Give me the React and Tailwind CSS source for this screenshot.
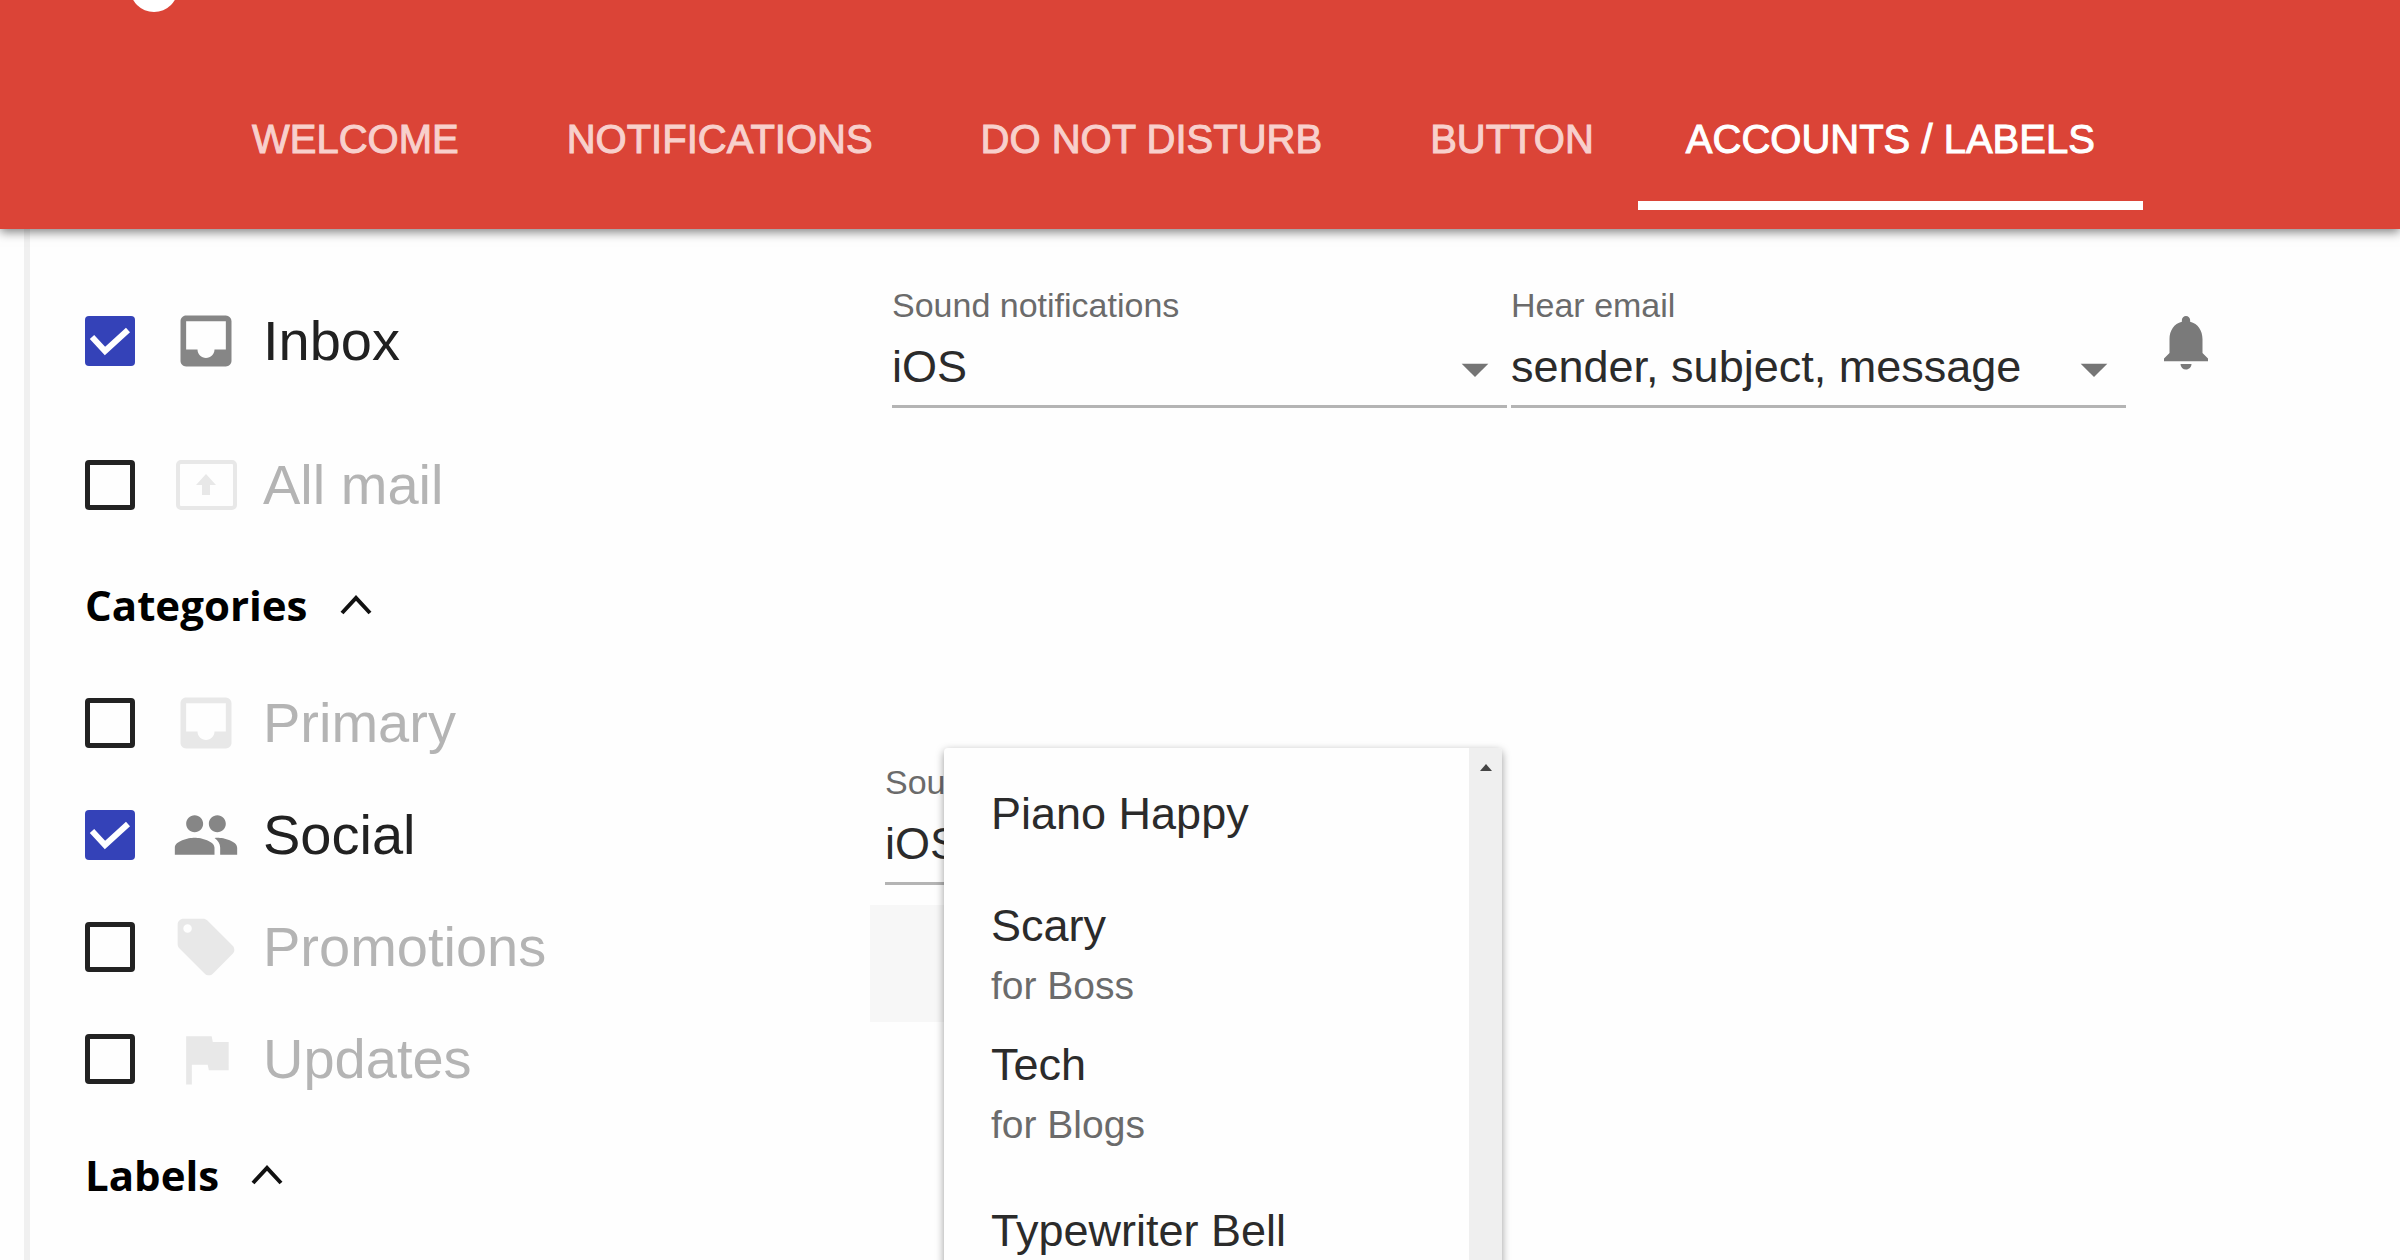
import { useState } from "react"
import { MdArrowDropDown, MdFlag, MdInbox, MdLocalOffer, MdNotifications, MdPeople } from "react-icons/md"

const tabs = ["Welcome", "Notifications", "Do not disturb", "Button", "Accounts / Labels"]

function AllMailIcon({ size, className }) {
  return (
    <svg width={size} height={size} viewBox="0 0 68 68" fill="none" className={className} aria-hidden="true">
      <rect x="6" y="11" width="57" height="46" rx="3" stroke="currentColor" strokeWidth="4" />
      <path d="M34 23 L44 34 H38 V44 H30 V34 H24 Z" fill="currentColor" />
    </svg>
  )
}

const mailboxes = [
  { id: "inbox", name: "Inbox", icon: MdInbox },
  { id: "all", name: "All mail", icon: AllMailIcon },
]

const categories = [
  { id: "primary", name: "Primary", icon: MdInbox },
  { id: "social", name: "Social", icon: MdPeople },
  { id: "promotions", name: "Promotions", icon: MdLocalOffer },
  { id: "updates", name: "Updates", icon: MdFlag },
]

const sounds = [
  { name: "Piano Happy" },
  { name: "Scary", note: "for Boss" },
  { name: "Tech", note: "for Blogs" },
  { name: "Typewriter Bell" },
]

function Header({ active, onSelect }) {
  return (
    <header className="relative z-10 bg-[#db4437] pb-[19px] shadow-[0_3px_10px_rgba(0,0,0,0.5)]">
      <div className="h-[69px] pl-[130px]">
        <svg width="48" height="12" viewBox="0 0 48 12" className="block" aria-hidden="true">
          <circle cx="24" cy="-12" r="24" fill="#fff" />
        </svg>
      </div>
      <nav className="flex pl-[198px]">
        {tabs.map((tab) => (
          <button
            key={tab}
            type="button"
            onClick={() => onSelect(tab)}
            className={`h-[141px] border-b-[9px] pt-2 text-[40px] whitespace-nowrap uppercase [-webkit-text-stroke:1px] ${
              tab === active ? "-ml-2.5 border-white px-12 text-white" : "border-transparent px-[54px] text-[#f8d0cc]"
            }`}
          >
            {tab}
          </button>
        ))}
      </nav>
    </header>
  )
}

function LabelRow({ item, checked, onToggle }) {
  const Icon = item.icon
  return (
    <label className="flex h-28 items-center">
      <input type="checkbox" checked={checked} onChange={onToggle} className="sr-only" />
      <span
        className={`flex size-[50px] items-center justify-center rounded-[4px] ${
          checked ? "bg-[#3442b8]" : "border-[5px] border-[#222]"
        }`}
      >
        {checked && (
          <svg width="42" height="32" viewBox="0 0 42 32" fill="none" aria-hidden="true">
            <path d="M3 12 L16 26 L39 5" stroke="#fff" strokeWidth="6" />
          </svg>
        )}
      </span>
      <Icon size={68} className={`ml-[37px] ${checked ? "text-[#868686]" : "text-[#e8e8e8]"}`} />
      <span className={`ml-[23px] text-[56px] leading-[64px] ${checked ? "text-[#212121]" : "text-[#b4b4b4]"}`}>
        {item.name}
      </span>
    </label>
  )
}

function SectionTitle({ children }) {
  return (
    <button
      type="button"
      className="flex h-12 items-center gap-8 font-['Open_Sans',sans-serif] text-[42px] leading-[48px] font-bold text-black"
    >
      {children}
      <svg width="32" height="20" viewBox="0 0 32 20" fill="none" aria-hidden="true">
        <path d="M2 18 L16 3 L30 18" stroke="#111" strokeWidth="4" />
      </svg>
    </button>
  )
}

function SelectField({ id, label, options }) {
  return (
    <div className="w-[615px]">
      <label htmlFor={id} className="block text-[34px] leading-10 text-[#6b6b6b]">
        {label}
      </label>
      <div className="relative mt-2 border-b-[3px] border-[#b4b4b4]">
        <select id={id} className="block h-[72px] w-full appearance-none bg-transparent pb-2.5 text-[45px] text-[#2b2b2b]">
          {options.map((option) => (
            <option key={option}>{option}</option>
          ))}
        </select>
        <MdArrowDropDown size={64} className="pointer-events-none absolute top-1 right-0 text-[#757575]" />
      </div>
    </div>
  )
}

function SoundMenu() {
  return (
    <div className="absolute top-[-14px] left-[74px] flex h-[700px] w-[558px] overflow-hidden rounded-[4px] bg-[#fefefe] shadow-[0_3px_8px_rgba(0,0,0,0.4)]">
      <ul role="listbox" aria-label="Sound notifications" className="-mt-1 flex-1">
        {sounds.map((sound) => (
          <li
            key={sound.name}
            role="option"
            aria-selected="false"
            className={`flex h-[139px] flex-col justify-center pl-[47px] text-[45px] leading-[60px] text-[#2b2b2b] ${
              sound.note ? "pt-1.5" : ""
            }`}
          >
            {sound.name}
            {sound.note && <span className="text-[39px] leading-[60px] text-[#6b6b6b]">{sound.note}</span>}
          </li>
        ))}
      </ul>
      <div className="w-[33px] bg-[#efefef] pt-4">
        <svg width="12" height="7" viewBox="0 0 12 7" className="mx-auto block" aria-hidden="true">
          <path d="M0 7 L6 0 L12 7 Z" fill="#444" />
        </svg>
      </div>
    </div>
  )
}

export default function App() {
  const [activeTab, setActiveTab] = useState("Accounts / Labels")
  const [enabled, setEnabled] = useState({ inbox: true, social: true })

  const toggle = (id) => setEnabled((current) => ({ ...current, [id]: !current[id] }))

  return (
    <div className="flex h-screen flex-col overflow-hidden bg-[#fefefe] font-['Liberation_Sans',Arial,sans-serif]">
      <Header active={activeTab} onSelect={setActiveTab} />
      <main className="ml-6 flex flex-1 border-l-[6px] border-[#f0f0f0] pl-[55px]">
        <section className="w-[785px] pt-14">
          <div className="flex flex-col gap-8">
            {mailboxes.map((item) => (
              <LabelRow key={item.id} item={item} checked={!!enabled[item.id]} onToggle={() => toggle(item.id)} />
            ))}
          </div>
          <div className="mt-10 mb-[38px]">
            <SectionTitle>Categories</SectionTitle>
          </div>
          {categories.map((item) => (
            <LabelRow key={item.id} item={item} checked={!!enabled[item.id]} onToggle={() => toggle(item.id)} />
          ))}
          <div className="mt-9">
            <SectionTitle>Labels</SectionTitle>
          </div>
        </section>
        <section className="flex-1 pt-14">
          <div className="flex gap-1 pl-[22px]">
            <SelectField id="inbox-sound" label="Sound notifications" options={["iOS", "Piano Happy", "Scary", "Tech"]} />
            <SelectField id="inbox-hear" label="Hear email" options={["sender, subject, message", "sender, subject"]} />
            <button type="button" aria-label="Notifications" className="mt-6 ml-[23px] self-start text-[#7a7a7a]">
              <MdNotifications size={66} />
            </button>
          </div>
          <div className="relative mt-[354px]">
            <div className="pl-[15px]">
              <SelectField id="social-sound" label="Sound notifications" options={["iOS", "Piano Happy"]} />
            </div>
            <div className="mt-5 h-[117px] w-[300px] bg-[#f7f7f7]" />
            <SoundMenu />
          </div>
        </section>
      </main>
    </div>
  )
}
